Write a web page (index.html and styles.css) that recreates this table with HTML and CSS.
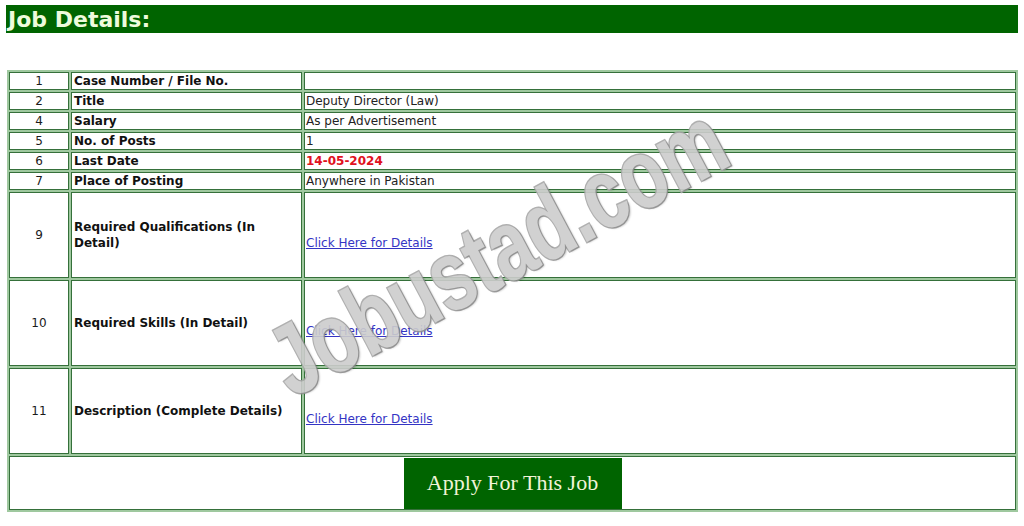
FILE: index.html
```html
<!DOCTYPE html>
<html>
<head>
<meta charset="utf-8">
<link rel="stylesheet" href="styles.css">
</head>
<body>
<div class="page">
  <h2 class="title">Job Details:</h2>
  <div class="table-wrap">
    <table class="jobs">
      <colgroup><col class="c1"><col class="c2"><col class="c3"></colgroup>
      <tr class="short"><td class="num">1</td><td class="lbl">Case Number / File No.</td><td class="val"></td></tr>
      <tr class="short"><td class="num">2</td><td class="lbl">Title</td><td class="val">Deputy Director (Law)</td></tr>
      <tr class="short"><td class="num">4</td><td class="lbl">Salary</td><td class="val">As per Advertisement</td></tr>
      <tr class="short"><td class="num">5</td><td class="lbl">No. of Posts</td><td class="val">1</td></tr>
      <tr class="short"><td class="num">6</td><td class="lbl">Last Date</td><td class="val date">14-05-2024</td></tr>
      <tr class="short"><td class="num">7</td><td class="lbl">Place of Posting</td><td class="val">Anywhere in Pakistan</td></tr>
      <tr class="tall"><td class="num">9</td><td class="lbl">Required Qualifications (In Detail)</td><td class="val"><a class="more" href="#">Click Here for Details</a></td></tr>
      <tr class="tall"><td class="num">10</td><td class="lbl">Required Skills (In Detail)</td><td class="val"><a class="more" href="#">Click Here for Details</a></td></tr>
      <tr class="tall"><td class="num">11</td><td class="lbl">Description (Complete Details)</td><td class="val"><a class="more" href="#">Click Here for Details</a></td></tr>
      <tr class="apply-row"><td colspan="3" class="apply-cell"><a class="apply" href="#">Apply For This Job</a></td></tr>
    </table>
    <div class="watermark">Jobustad.com</div>
  </div>
</div>
</body>
</html>
```

FILE: styles.css
```css
html, body {
  margin: 0;
  padding: 0;
  background: #ffffff;
}
.page {
  padding: 5px 6px 0 6px;
  font-family: "DejaVu Sans", Verdana, sans-serif;
  color: #1a1a1a;
}
.title {
  margin: 0;
  height: 28px;
  line-height: 29px;
  background: #006400;
  color: #eefbdc;
  font-family: "DejaVu Sans", Verdana, sans-serif;
  font-weight: bold;
  font-size: 22px;
  padding-left: 2px;
  width: 1010px;
}
.table-wrap {
  position: relative;
  margin-top: 37px;
  margin-left: 1px;
}
.jobs {
  width: 1011px;
  border-collapse: separate;
  border-spacing: 2px;
  background: #9fc89f;
  table-layout: fixed;
  font-size: 12px;
}
.jobs col.c1 { width: 60px; }
.jobs col.c2 { width: 231px; }
.jobs col.c3 { width: auto; }
.jobs td {
  background: #ffffff;
  border: 1px solid #35703a;
  padding: 0 1px;
  vertical-align: middle;
  line-height: 16px;
}
.jobs tr.short td { height: 16px; }
.jobs tr.tall td { height: 84px; }
.jobs td.num { text-align: center; }
.jobs td.lbl { font-weight: bold; padding-left: 2px; color: #111; }
.jobs td.val { color: #222; }
.jobs td.date { color: #e01020; font-weight: bold; }
.more {
  display: inline-block;
  margin-top: 16px;
  color: #3434c4;
  text-decoration: underline;
}
.apply-cell {
  height: 52px;
  text-align: center;
  vertical-align: middle;
}
.apply {
  display: inline-block;
  width: 218px;
  height: 51px;
  line-height: 50px;
  background: #006400;
  color: #f2f4d8;
  font-family: "Liberation Serif", "Times New Roman", serif;
  font-size: 22px;
  text-decoration: none;
}
.watermark {
  position: absolute;
  left: 490px;
  top: 180px;
  transform: translate(-50%, -50%) rotate(-28deg) scaleX(0.74);
  font-family: "Liberation Sans", Arial, sans-serif;
  font-weight: bold;
  font-size: 100px;
  line-height: 1;
  white-space: nowrap;
  color: #cdcdcd;
  -webkit-text-stroke: 3px #a8a8a8;
  paint-order: stroke fill;
  text-shadow: 2px 2px 2px rgba(0, 0, 0, 0.2);
  opacity: 0.9;
  pointer-events: none;
}
```
